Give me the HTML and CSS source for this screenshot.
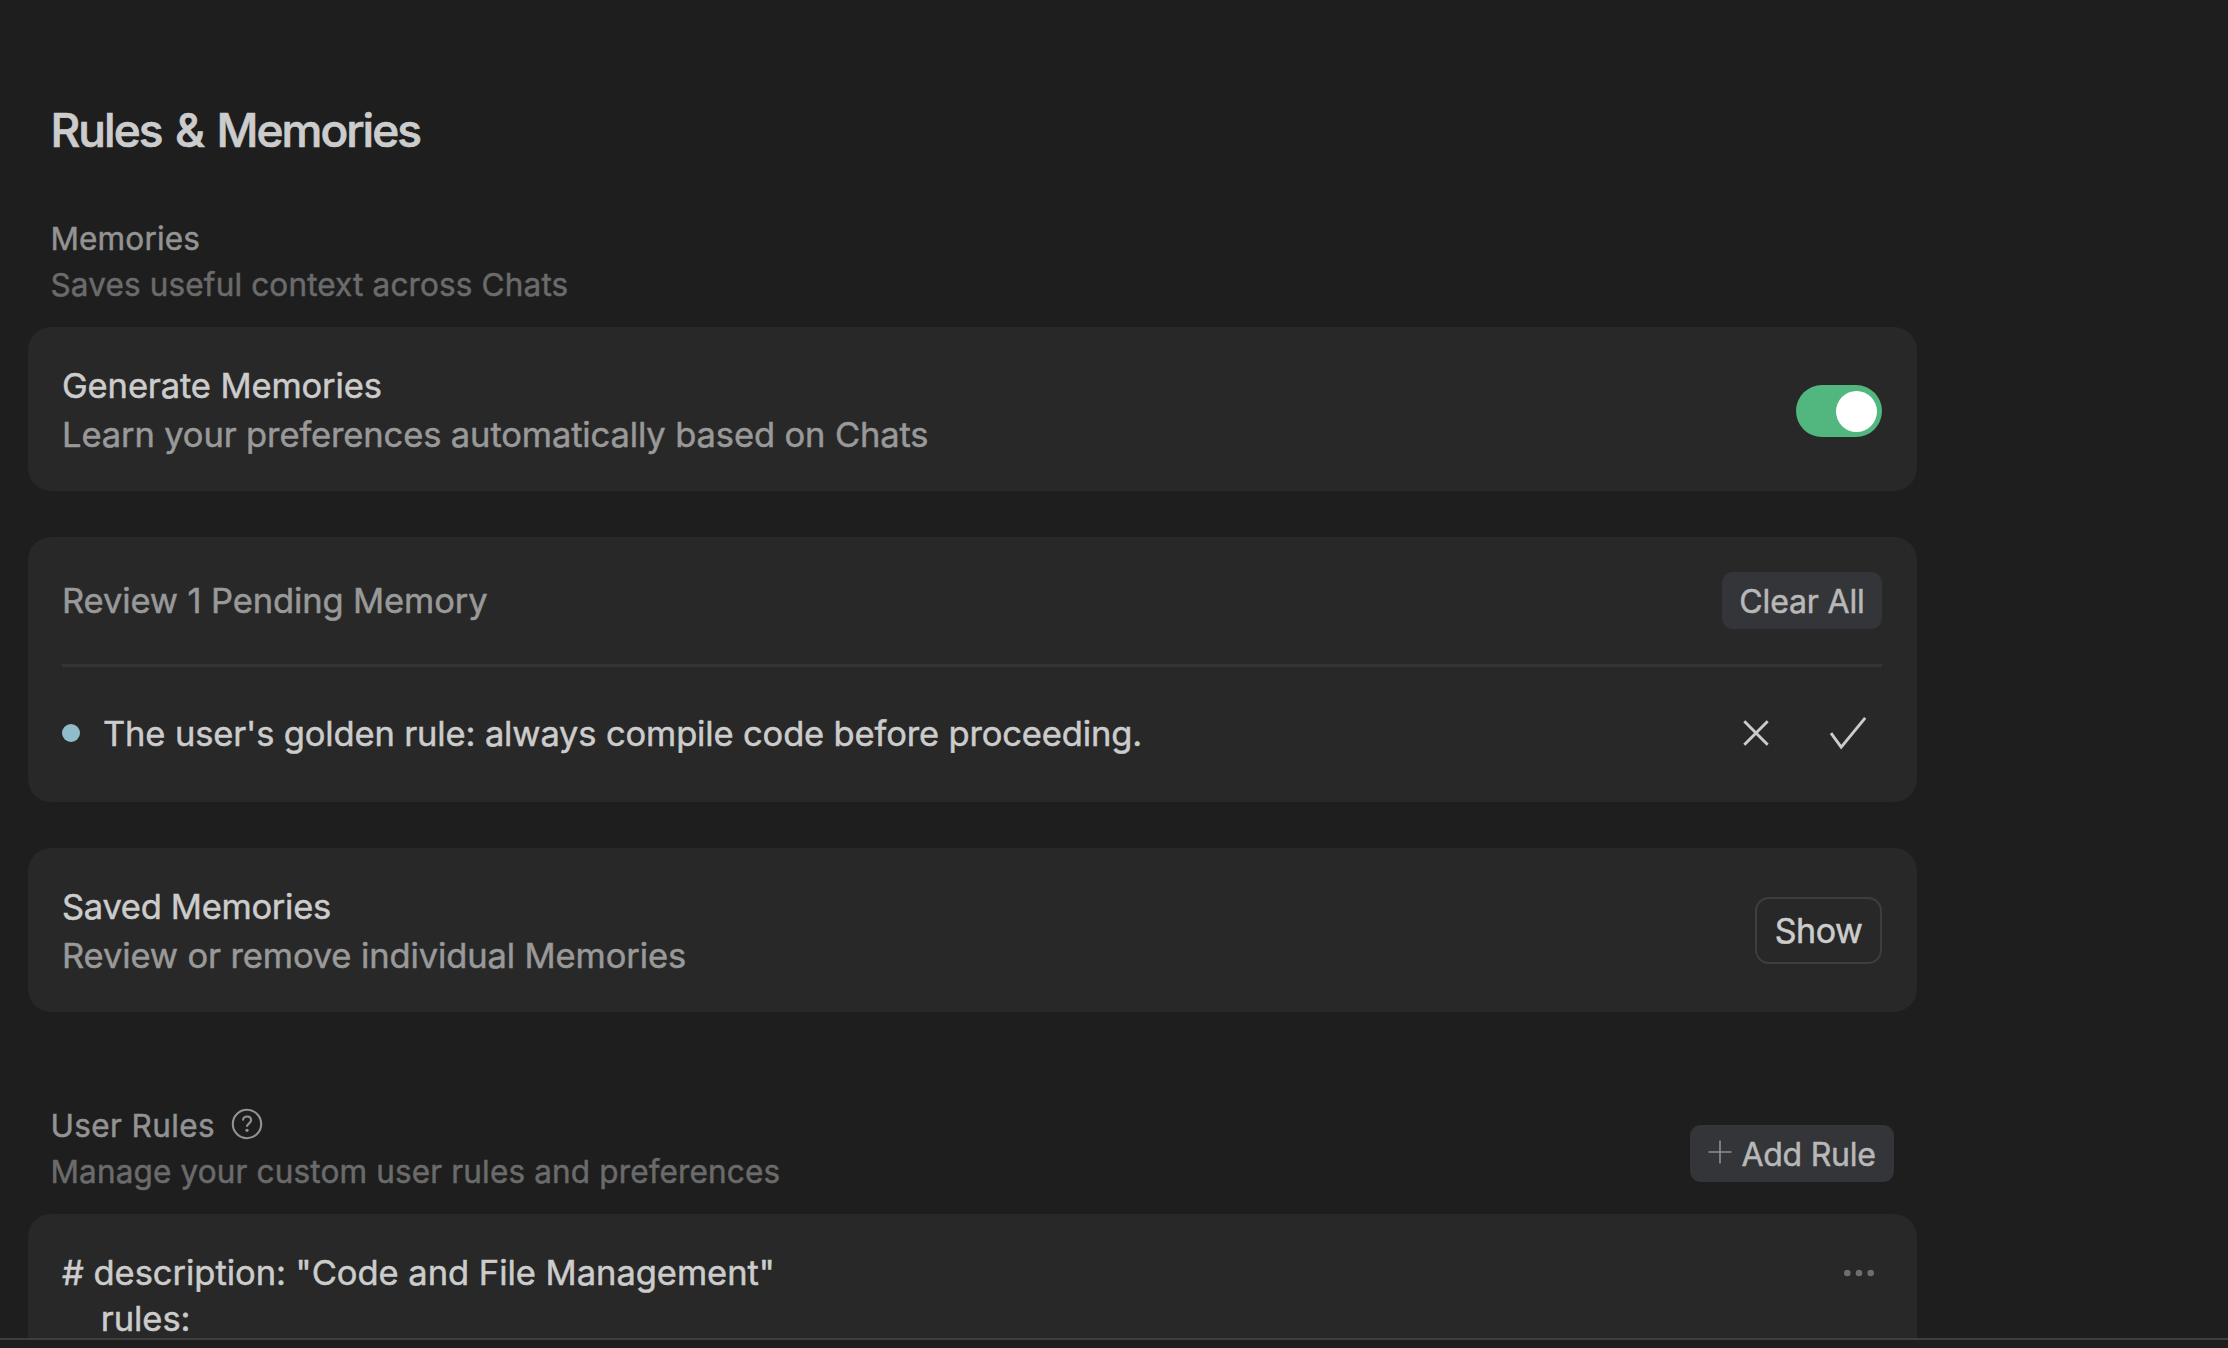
FILE: index.html
```
<!DOCTYPE html>
<html lang="en">
<head>
<meta charset="utf-8">
<title>Rules &amp; Memories</title>
<link rel="stylesheet" href="styles.css">
</head>
<body>
<main class="settings">
  <h1 class="title">Rules &amp; Memories</h1>

  <header class="section-head">
    <div>
      <h2 class="section-title">Memories</h2>
      <p class="section-desc">Saves useful context across Chats</p>
    </div>
  </header>

  <section class="card card-row">
    <div>
      <h3 class="item-title">Generate Memories</h3>
      <p class="item-desc">Learn your preferences automatically based on Chats</p>
    </div>
    <div class="toggle" role="switch" aria-checked="true"><span class="toggle-knob"></span></div>
  </section>

  <section class="card card-pending">
    <div class="pending-head">
      <h3 class="item-desc">Review 1 Pending Memory</h3>
      <button class="btn btn-secondary btn-clear">Clear All</button>
    </div>
    <div class="pending-row">
      <span class="dot"></span>
      <p class="pending-text">The user's golden rule: always compile code before proceeding.</p>
      <div class="pending-actions">
        <svg class="icon-close" viewBox="0 0 28 28" role="img" aria-label="Reject"><path d="M2.3 2.3 25.7 25.7M25.7 2.3 2.3 25.7"/></svg>
        <svg class="icon-check" viewBox="0 0 38 34" role="img" aria-label="Accept"><path d="M2 17.2 12.2 31.2 36.2 1.8"/></svg>
      </div>
    </div>
  </section>

  <section class="card card-row">
    <div>
      <h3 class="item-title item-title-saved">Saved Memories</h3>
      <p class="item-desc">Review or remove individual Memories</p>
    </div>
    <button class="btn btn-outline">Show</button>
  </section>

  <header class="section-head section-head-rules">
    <div>
      <h2 class="section-title section-title-rules">User Rules
        <svg class="icon-help" viewBox="0 0 32 32" role="img" aria-label="Help"><circle cx="16" cy="16" r="14.2"/><path d="M12 12.4c0-2.4 1.7-3.9 4.1-3.9s4 1.5 4 3.7c0 3.1-4.1 3.2-4.1 6.6"/><circle class="icon-help-point" cx="16" cy="22.3" r="1.6"/></svg>
      </h2>
      <p class="section-desc">Manage your custom user rules and preferences</p>
    </div>
    <button class="btn btn-secondary btn-add"><svg class="icon-plus" viewBox="0 0 24 24" aria-hidden="true"><path d="M12 .5v23M.5 12h23"/></svg>Add Rule</button>
  </header>

  <section class="card card-rule">
    <pre class="rule-text"># description: "Code and File Management"
    rules:</pre>
    <svg class="icon-more" viewBox="0 0 32 8" role="img" aria-label="More"><circle cx="4.3" cy="4" r="3.3"/><circle cx="16" cy="4" r="3.3"/><circle cx="27.7" cy="4" r="3.3"/></svg>
  </section>
</main>
<footer class="panel-edge"></footer>
</body>
</html>
```
FILE: styles.css
```
* {
  box-sizing: border-box;
  margin: 0;
  padding: 0;
}

body {
  display: flex;
  flex-direction: column;
  height: 1348px;
  overflow: hidden;
  background: #1e1e1e;
  color: #cccccc;
  font-family: "Inter", "Liberation Sans", sans-serif;
  -webkit-text-stroke-width: 0.5px;
}

h1, h2, h3 {
  font-weight: 400;
}

.settings {
  flex: 0 0 1338px;
  width: 1917px;
  padding: 101px 0 0 28px;
  overflow: hidden;
}

.title {
  padding-left: 22.5px;
  font-size: 46px;
  line-height: 58px;
  font-weight: 500;
  letter-spacing: -1.98px;
  word-spacing: 3.2px;
  -webkit-text-stroke-width: 0.7px;
}

.section-head {
  display: flex;
  justify-content: space-between;
  align-items: flex-end;
  margin: 57px 23px 19px 22.5px;
}

.section-title,
.section-desc {
  font-size: 31.5px;
  line-height: 46px;
  letter-spacing: 0.15px;
}

.section-title {
  color: #939393;
}

.section-desc {
  color: #6b6b6b;
}

.section-head-rules {
  margin-top: 91px;
}

.section-title-rules {
  display: flex;
  align-items: center;
  gap: 16px;
  letter-spacing: 0.38px;
}

.card {
  border-radius: 23px;
  background: #282828;
  padding: 35px 35px 0 34px;
  font-size: 34.5px;
  letter-spacing: -0.12px;
}

.card-row {
  display: flex;
  align-items: center;
  justify-content: space-between;
  height: 164px;
  padding-top: 2px;
}

.item-title,
.item-desc {
  font-size: 34.5px;
  line-height: 49px;
}

.item-title-saved {
  letter-spacing: -0.3px;
}

.item-desc {
  color: #999999;
}

.toggle {
  display: flex;
  align-items: center;
  justify-content: flex-end;
  width: 86px;
  height: 52px;
  margin-top: 2px;
  padding-right: 5px;
  border-radius: 26px;
  background: #51b77e;
}

.toggle-knob {
  width: 41px;
  height: 41px;
  border-radius: 50%;
  background: #ffffff;
}

.card-pending {
  height: 265px;
  margin: 46px 0;
}

.pending-head {
  display: flex;
  align-items: center;
  justify-content: space-between;
  height: 95px;
  padding-bottom: 35px;
  border-bottom: 3px solid #343434;
}

.pending-row {
  display: flex;
  align-items: center;
  height: 132px;
}

.dot {
  width: 18px;
  height: 18px;
  border-radius: 50%;
  background: #91bdcb;
}

.pending-text {
  flex: 1;
  padding-left: 23px;
  letter-spacing: -0.15px;
  line-height: 49px;
}

.pending-actions {
  display: flex;
  align-items: center;
  gap: 59px;
  padding-right: 15px;
}

.icon-close {
  width: 28px;
  height: 28px;
}

.icon-check {
  width: 38px;
  height: 34px;
}

.icon-close,
.icon-check {
  fill: none;
  stroke: #cccccc;
  stroke-width: 2.9;
}

.btn {
  display: flex;
  align-items: center;
  justify-content: center;
  border: 0;
  font: inherit;
  white-space: nowrap;
}

.btn-secondary {
  height: 57px;
  border-radius: 11px;
  background: #343539;
  color: #b8b8b8;
  font-size: 32px;
  letter-spacing: -0.15px;
}

.btn-clear {
  width: 160px;
  padding-top: 1px;
}

.btn-add {
  gap: 9px;
  width: 204px;
  margin-bottom: 13px;
  padding-top: 1px;
  letter-spacing: -0.25px;
}

.btn-outline {
  width: 127px;
  height: 67px;
  margin-bottom: 1px;
  border: 2px solid #3e3e3e;
  border-radius: 14px;
  background: transparent;
  color: #cccccc;
  font-size: 34px;
  letter-spacing: -0.5px;
}

.icon-plus {
  width: 24px;
  height: 24px;
  margin-bottom: 5px;
  fill: none;
  stroke: #8f8f90;
  stroke-width: 1.6;
}

.icon-help {
  width: 32px;
  height: 32px;
  margin-bottom: 4px;
  fill: none;
  stroke: #939393;
  stroke-width: 2.1;
}

.icon-help-point {
  fill: #939393;
  stroke: none;
}

.card-rule {
  display: flex;
  align-items: flex-start;
  justify-content: space-between;
  height: 200px;
  padding-top: 36px;
}

.rule-text {
  font: inherit;
  line-height: 46px;
  letter-spacing: -0.03px;
}

.icon-more {
  width: 32px;
  height: 8px;
  margin: 19px 7px 0 0;
  fill: #6e6e6e;
}

.panel-edge {
  flex: 1;
  border-top: 2px solid #3e3e3e;
}
```
